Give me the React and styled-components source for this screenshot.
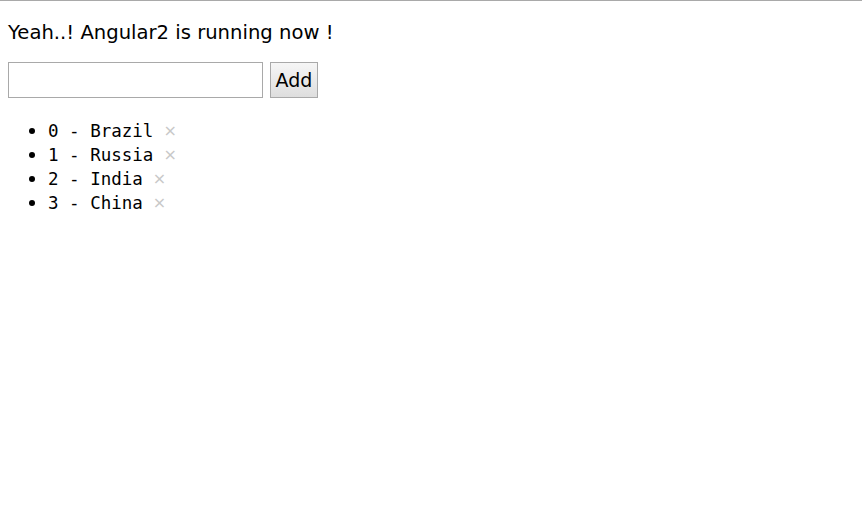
import React from "react";
import styled, { createGlobalStyle } from "styled-components";

const Global = createGlobalStyle`
  html, body { margin: 0; padding: 0; background: #fff; }
  body { border-top: 1px solid #a9a9a9; }
`;

const Page = styled.div`
  padding: 8px;
  font-family: "DejaVu Sans", Verdana, sans-serif;
  color: #000;
`;

const Title = styled.h1`
  margin: 12px 0 0 0;
  font-size: 19.6px;
  font-weight: normal;
  line-height: 24px;
`;

const Form = styled.div`
  display: flex;
  gap: 7px;
  margin-top: 17px;
`;

const Input = styled.input`
  box-sizing: border-box;
  width: 255px;
  height: 36px;
  border: 1px solid #a9a9a9;
  padding: 2px 4px;
  font-size: 18px;
  outline: none;
`;

const Button = styled.button`
  box-sizing: border-box;
  width: 48px;
  height: 36px;
  border: 1px solid #a9a9a9;
  background: linear-gradient(#f6f6f6, #dedede);
  font-family: "DejaVu Sans", Verdana, sans-serif;
  font-size: 19px;
  color: #000;
  padding: 0;
`;

const List = styled.ul`
  margin: 20px 0 0 0;
  padding-left: 40px;
  font-family: "DejaVu Sans Mono", "Liberation Mono", monospace;
  font-size: 17.5px;
  line-height: 24px;
`;

const Item = styled.li`
  height: 24px;
  line-height: 24px;
  &::marker { font-size: 20px; }
`;

const Remove = styled.span`
  color: #c8c8c8;
  font-family: "DejaVu Sans", sans-serif;
  font-size: 16px;
  line-height: 1;
  margin-left: 10px;
  vertical-align: 1px;
`;

const countries = ["Brazil", "Russia", "India", "China"];

export default function App() {
  return (
    <>
      <Global />
      <Page>
        <Title>Yeah..! Angular2 is running now !</Title>
        <Form>
          <Input />
          <Button>Add</Button>
        </Form>
        <List>
          {countries.map((c, i) => (
            <Item key={c}>
              {i} - {c}
              <Remove>×</Remove>
            </Item>
          ))}
        </List>
      </Page>
    </>
  );
}
